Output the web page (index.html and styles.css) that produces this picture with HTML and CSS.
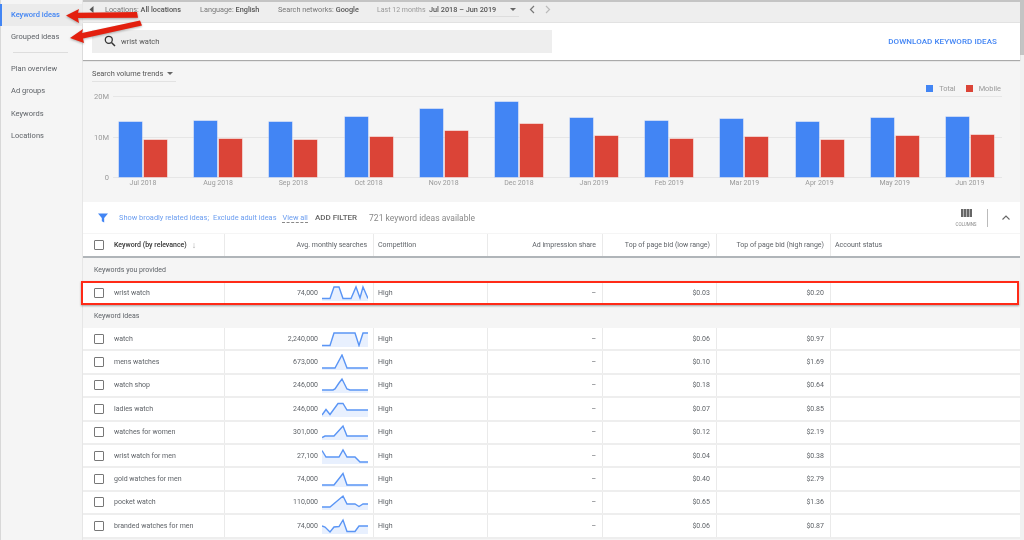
FILE: index.html
```html
<!DOCTYPE html>
<html lang="en">
<head>
<meta charset="utf-8">
<title>Keyword ideas</title>
<link rel="stylesheet" href="styles.css">
</head>
<body>
<div class="page">
  <nav class="sidebar">
    <a class="nav-item active">Keyword ideas</a>
    <a class="nav-item">Grouped ideas</a>
    <div class="nav-divider"></div>
    <a class="nav-item">Plan overview</a>
    <a class="nav-item">Ad groups</a>
    <a class="nav-item">Keywords</a>
    <a class="nav-item">Locations</a>
  </nav>
  <main class="main">
    <header class="topbar">
      <svg class="collapse" width="6" height="9" viewBox="0 0 6 9"><path d="M4.500 1v7L.5 4.500z"/></svg>
      <span class="crumb crumb-loc">Locations: <b>All locations</b></span>
      <span class="crumb crumb-lang">Language: <b>English</b></span>
      <span class="crumb crumb-net">Search networks: <b>Google</b></span>
      <span class="crumb crumb-last">Last 12 months</span>
      <span class="range"><b>Jul 2018 – Jun 2019</b><i class="caret"></i></span>
      <svg class="pager" width="6" height="9" viewBox="0 0 6 9"><path d="M5 1 1.500 4.500 5 8" fill="none" stroke="#777" stroke-width="1.200"/></svg>
      <svg class="pager pager-next" width="6" height="9" viewBox="0 0 6 9"><path d="M1 1l3.500 3.500L1 8" fill="none" stroke="#bbb" stroke-width="1.200"/></svg>
    </header>
    <section class="searchbar">
      <div class="search-box">
        <svg width="12" height="12" viewBox="0 0 12 12"><circle cx="4.800" cy="4.800" r="3.500" fill="none" stroke="#333" stroke-width="1.300"/><path d="M7.500 7.500 11 11" stroke="#333" stroke-width="1.500"/></svg>
        <span>wrist watch</span>
      </div>
      <a class="download">DOWNLOAD KEYWORD IDEAS</a>
    </section>
    <section class="chart">
      <div class="chart-head">
        <div class="trend-select">Search volume trends<i class="caret"></i></div>
        <div class="legend">
          <i class="swatch blue"></i><span>Total</span>
          <i class="swatch red"></i><span>Mobile</span>
        </div>
      </div>
      <div class="chart-body">
        <div class="y-axis"><span>20M</span><span>10M</span><span>0</span></div>
        <div class="plot">
          <div class="bars">
            <div class="group"><i class="bar blue" style="height:55px"></i><i class="bar red" style="height:37px"></i></div>
            <div class="group"><i class="bar blue" style="height:56px"></i><i class="bar red" style="height:38px"></i></div>
            <div class="group"><i class="bar blue" style="height:55px"></i><i class="bar red" style="height:37px"></i></div>
            <div class="group"><i class="bar blue" style="height:60px"></i><i class="bar red" style="height:40px"></i></div>
            <div class="group"><i class="bar blue" style="height:68px"></i><i class="bar red" style="height:46px"></i></div>
            <div class="group"><i class="bar blue" style="height:75px"></i><i class="bar red" style="height:53px"></i></div>
            <div class="group"><i class="bar blue" style="height:59px"></i><i class="bar red" style="height:41px"></i></div>
            <div class="group"><i class="bar blue" style="height:56px"></i><i class="bar red" style="height:38px"></i></div>
            <div class="group"><i class="bar blue" style="height:58px"></i><i class="bar red" style="height:40px"></i></div>
            <div class="group"><i class="bar blue" style="height:55px"></i><i class="bar red" style="height:37px"></i></div>
            <div class="group"><i class="bar blue" style="height:59px"></i><i class="bar red" style="height:41px"></i></div>
            <div class="group"><i class="bar blue" style="height:60px"></i><i class="bar red" style="height:42px"></i></div>
          </div>
          <div class="months">
            <span>Jul 2018</span><span>Aug 2018</span><span>Sep 2018</span><span>Oct 2018</span><span>Nov 2018</span><span>Dec 2018</span><span>Jan 2019</span><span>Feb 2019</span><span>Mar 2019</span><span>Apr 2019</span><span>May 2019</span><span>Jun 2019</span>
          </div>
        </div>
      </div>
    </section>
    <section class="filterbar">
      <svg class="funnel" width="10" height="10" viewBox="0 0 11 11"><path d="M0 .500h11L6.800 5.500V10.500L4.200 9V5.500z"/></svg>
      <a class="link">Show broadly related ideas;</a>
      <a class="link">Exclude adult ideas</a>
      <a class="link view-all">View all</a>
      <span class="add-filter">ADD FILTER</span>
      <span class="count">721 keyword ideas available</span>
      <div class="columns-btn">
        <svg width="11" height="8" viewBox="0 0 11 8"><path d="M0 0h2.400v8H0zM2.900 0h2.400v8H2.900zM5.800 0h2.400v8H5.800zM8.700 0H11v8H8.700z"/></svg>
        <span>COLUMNS</span>
      </div>
      <i class="filter-divider"></i>
      <svg class="chev-up" width="8" height="5" viewBox="0 0 8 5"><path d="M.500 4.500 4 1l3.500 3.500" fill="none" stroke="#666" stroke-width="1.100"/></svg>
    </section>
    <section class="table">
      <div class="row head">
        <div class="cell kw"><i class="check"></i><b>Keyword (by relevance)</b><span class="sort">↓</span></div>
        <div class="cell num">Avg. monthly searches</div>
        <div class="cell">Competition</div>
        <div class="cell num">Ad impression share</div>
        <div class="cell num">Top of page bid (low range)</div>
        <div class="cell num">Top of page bid (high range)</div>
        <div class="cell">Account status</div>
      </div>
      <div class="group-label">Keywords you provided</div>
      <div class="row provided">
        <div class="cell kw"><i class="check"></i>wrist watch</div>
        <div class="cell searches">74,000<svg class="spark" viewBox="0 0 46 16"><polygon points="0,16 0,13.500 8,13.500 12,2 17,2 21,13.500 29,13.500 34,2 38,13 41,2 46,13.500 46,16"/><polyline points="0,13.500 8,13.500 12,2 17,2 21,13.500 29,13.500 34,2 38,13 41,2 46,13.500"/></svg></div>
        <div class="cell">High</div><div class="cell num">–</div><div class="cell num">$0.03</div><div class="cell num">$0.20</div><div class="cell"></div>
      </div>
      <div class="group-label">Keyword ideas</div>
      <div class="row">
        <div class="cell kw"><i class="check"></i>watch</div>
        <div class="cell searches">2,240,000<svg class="spark" viewBox="0 0 46 16"><polygon points="0,16 0,14.500 8,14.500 12,2 33,2 37,14.500 41,2 46,2 46,16"/><polyline points="0,14.500 8,14.500 12,2 33,2 37,14.500 41,2 46,2"/></svg></div>
        <div class="cell">High</div><div class="cell num">–</div><div class="cell num">$0.06</div><div class="cell num">$0.97</div><div class="cell"></div>
      </div>
      <div class="row">
        <div class="cell kw"><i class="check"></i>mens watches</div>
        <div class="cell searches">673,000<svg class="spark" viewBox="0 0 46 16"><polygon points="0,16 0,14 13,14 20,1 25,14 46,14 46,16"/><polyline points="0,14 13,14 20,1 25,14 46,14"/></svg></div>
        <div class="cell">High</div><div class="cell num">–</div><div class="cell num">$0.10</div><div class="cell num">$1.69</div><div class="cell"></div>
      </div>
      <div class="row">
        <div class="cell kw"><i class="check"></i>watch shop</div>
        <div class="cell searches">246,000<svg class="spark" viewBox="0 0 46 16"><polygon points="0,16 0,13 11,13 13,12 17,6 20,2 25,12 28,13 46,13 46,16"/><polyline points="0,13 11,13 13,12 17,6 20,2 25,12 28,13 46,13"/></svg></div>
        <div class="cell">High</div><div class="cell num">–</div><div class="cell num">$0.18</div><div class="cell num">$0.64</div><div class="cell"></div>
      </div>
      <div class="row">
        <div class="cell kw"><i class="check"></i>ladies watch</div>
        <div class="cell searches">246,000<svg class="spark" viewBox="0 0 46 16"><polygon points="0,16 0,14 4,8.500 8,13.500 16,2.500 21,2.500 25,9 46,9 46,16"/><polyline points="0,14 4,8.500 8,13.500 16,2.500 21,2.500 25,9 46,9"/></svg></div>
        <div class="cell">High</div><div class="cell num">–</div><div class="cell num">$0.07</div><div class="cell num">$0.85</div><div class="cell"></div>
      </div>
      <div class="row">
        <div class="cell kw"><i class="check"></i>watches for women</div>
        <div class="cell searches">301,000<svg class="spark" viewBox="0 0 46 16"><polygon points="0,16 0,13.500 3,12 12,12 21,2 25,12 46,12 46,16"/><polyline points="0,13.500 3,12 12,12 21,2 25,12 46,12"/></svg></div>
        <div class="cell">High</div><div class="cell num">–</div><div class="cell num">$0.12</div><div class="cell num">$2.19</div><div class="cell"></div>
      </div>
      <div class="row">
        <div class="cell kw"><i class="check"></i>wrist watch for men</div>
        <div class="cell searches">27,100<svg class="spark" viewBox="0 0 46 16"><polygon points="0,16 0,2.500 4,9 17,9 21,2 25,9 33,9 38,14 46,14 46,16"/><polyline points="0,2.500 4,9 17,9 21,2 25,9 33,9 38,14 46,14"/></svg></div>
        <div class="cell">High</div><div class="cell num">–</div><div class="cell num">$0.04</div><div class="cell num">$0.38</div><div class="cell"></div>
      </div>
      <div class="row">
        <div class="cell kw"><i class="check"></i>gold watches for men</div>
        <div class="cell searches">74,000<svg class="spark" viewBox="0 0 46 16"><polygon points="0,16 0,14 12,14 21,2.500 25,14 46,14 46,16"/><polyline points="0,14 12,14 21,2.500 25,14 46,14"/></svg></div>
        <div class="cell">High</div><div class="cell num">–</div><div class="cell num">$0.40</div><div class="cell num">$2.79</div><div class="cell"></div>
      </div>
      <div class="row">
        <div class="cell kw"><i class="check"></i>pocket watch</div>
        <div class="cell searches">110,000<svg class="spark" viewBox="0 0 46 16"><polygon points="0,16 0,13 8,13 21,2 25,10 33,10 37,12.500 41,10 46,10 46,16"/><polyline points="0,13 8,13 21,2 25,10 33,10 37,12.500 41,10 46,10"/></svg></div>
        <div class="cell">High</div><div class="cell num">–</div><div class="cell num">$0.65</div><div class="cell num">$1.36</div><div class="cell"></div>
      </div>
      <div class="row">
        <div class="cell kw"><i class="check"></i>branded watches for men</div>
        <div class="cell searches">74,000<svg class="spark" viewBox="0 0 46 16"><polygon points="0,16 0,8 3,9 8,14 12,9 17,8.500 21,2 25,13.500 33,13.500 37,8 46,8 46,16"/><polyline points="0,8 3,9 8,14 12,9 17,8.500 21,2 25,13.500 33,13.500 37,8 46,8"/></svg></div>
        <div class="cell">High</div><div class="cell num">–</div><div class="cell num">$0.06</div><div class="cell num">$0.87</div><div class="cell"></div>
      </div>
    </section>
  </main>
  <div class="scrollbar"><i class="thumb"></i></div>

  <div class="highlight"></div>
  <svg class="arrows" width="150" height="50" viewBox="0 0 150 50">
    <polygon points="66,15.500 79,9 78,12.700 137,12 138,17.800 78,18 79,23"/>
    <polygon points="70,38 83,29 82,33 140,20.500 142,25.500 83,38.500 84,43"/>
  </svg>
</div>
</body>
</html>
```
FILE: styles.css
```css
* { box-sizing: border-box; }
html, body { margin: 0; height: 100%; background: #f5f5f5; overflow: hidden; }
body { font-family: Roboto, "Liberation Sans", sans-serif; font-size: 7px; color: #5f6368; }
b { font-weight: 500; }
i { display: block; font-style: normal; }

.page { position: relative; display: flex; width: 1024px; height: 540px; overflow: hidden; background: #f5f5f5; filter: blur(.4px); }

/* Sidebar */
.sidebar { width: 83px; flex: none; padding-top: 3.500px; border-left: 1px solid #d8d8d8; border-right: 1px solid #e6e6e6; background: #f5f5f5; font-size: 7.500px; }
.nav-item { display: flex; align-items: center; height: 22.300px; padding-left: 10px; }
.nav-item.active { height: 22px; margin-left: -1px; padding-left: 9px; border-left: 2px solid #4285f4; background: #ebebeb; color: #4285f4; font-weight: 500; }
.nav-divider { height: 1px; margin: 4px 14px 4.500px 12px; background: #ddd; }

/* Main column */
.main { flex: 1; min-width: 0; display: flex; flex-direction: column; }

.topbar { display: flex; align-items: center; height: 23px; padding: 0 0 5px 6px; background: #eeeeee; border-top: 2px solid #c4c4c4; border-bottom: 1px solid #e2e2e2; white-space: nowrap; font-size: 7.300px; }
.collapse { fill: #555; margin-right: 10px; flex: none; }
.crumb { color: #777; }
.crumb b { color: #555; }
.crumb-loc { width: 95px; }
.crumb-lang { width: 78px; }
.crumb-net { width: 99px; }
.crumb-last { width: 52px; color: #999; font-size: 7px; }
.range { display: flex; align-items: center; justify-content: space-between; width: 90px; height: 14px; padding-right: 3px; border-bottom: 1px solid #ddd; color: #555; }
.caret { width: 0; height: 0; border: 3px solid transparent; border-top-color: #666; border-bottom: 0; }
.pager { margin-left: 10px; flex: none; }

.searchbar { display: flex; align-items: center; justify-content: space-between; height: 37px; padding: 0 23px 1px 9px; background: #fff; box-shadow: 0 1px 1px #aaa; position: relative; font-size: 7.500px; }
.search-box { display: flex; align-items: center; gap: 5px; width: 460px; height: 23px; padding-left: 12px; background: #eeeeee; color: #555; }
.search-box svg { flex: none; }
.download { color: #4285f4; font-weight: 500; font-size: 8px; letter-spacing: .08px; }

.chart { height: 142px; padding-top: 5px; }
.chart-head { display: flex; justify-content: space-between; height: 31px; padding: 0 19px 0 9px; font-size: 7.400px; }
.trend-select { display: flex; align-items: center; gap: 4px; width: 84px; height: 17px; border-bottom: 1px solid #e2e2e2; color: #555; white-space: nowrap; }
.legend { display: flex; align-items: center; height: 12px; margin-top: 17.500px; color: #9a9a9a; }
.swatch { width: 7px; height: 7px; margin-right: 6px; }
.legend span + .swatch { margin-left: 10px; }
.blue { background: #4285f4; }
.red { background: #db4437; }

.chart-body { display: flex; padding-right: 18px; }
.y-axis { display: flex; flex-direction: column; justify-content: space-between; width: 30px; height: 82px; padding-right: 4px; text-align: right; color: #9a9a9a; flex: none; font-size: 7.500px; }
.y-axis span { line-height: 1px; height: 1px; }
.plot { flex: 1; min-width: 0; }
.bars {
  display: grid; grid-template-columns: repeat(12, 75.180px); height: 82px; margin-left: -7.600px; margin-right: -6px; align-items: end;
  background:
    linear-gradient(#e6e6e6, #e6e6e6) 7.600px 0 / 889px 1px no-repeat,
    linear-gradient(#e6e6e6, #e6e6e6) 7.600px 41px / 889px 1px no-repeat,
    linear-gradient(#e6e6e6, #e6e6e6) 7.600px 81px / 889px 1px no-repeat;
}
.group { display: flex; align-items: flex-end; justify-content: center; gap: 2px; height: 81px; align-self: start; }
.bar { width: 23px; }
.bar.blue { box-shadow: 0 0 0 .5px #9dbcf5; }
.bar.red { box-shadow: 0 0 0 .5px #eea8a0; }
.months { display: grid; grid-template-columns: repeat(12, 75.180px); margin: 0 -6px 0 -7.600px; padding-top: 1px; text-align: center; color: #9a9a9a; font-size: 7px; }

.filterbar { display: flex; align-items: center; height: 31px; padding: 0 0 0 15px; background: #fff; white-space: nowrap; font-size: 7.400px; }
.funnel { fill: #4285f4; margin-right: 11px; flex: none; }
.link { color: #6c9ef0; margin-right: 4px; }
.view-all { margin-left: 2px; margin-right: 7px; border-bottom: 1px dashed #888; }
.add-filter { font-weight: 500; color: #666; margin-right: 12px; font-size: 8px; }
.count { color: #888; font-size: 8.500px; }
.columns-btn { display: flex; flex-direction: column; align-items: center; gap: 5px; margin-left: auto; width: 24px; fill: #666; }
.columns-btn span { font-size: 4.500px; color: #888; }
.filter-divider { width: 1px; height: 18px; margin: 0 14px 0 9px; background: #bbb; }
.chev-up { margin-right: 10px; }

.table { background: #f5f5f5; flex: 1; }
.row { display: grid; grid-template-columns: 141px 149px 114px 115px 114px 114px 1fr; height: 23.400px; background: #fff; border-bottom: 2px solid #eeeeee; }
.cell { display: flex; align-items: center; padding: 0 5px 0 4px; border-left: 1px solid #eaeaea; white-space: nowrap; min-width: 0; }
.cell:first-child { border-left: 0; }
.num { justify-content: flex-end; padding-right: 6px; }
.kw { padding-left: 11px; }
.check { width: 10px; height: 10px; margin-right: 10px; border: 1.500px solid #777; border-radius: 1px; flex: none; }
.sort { margin-left: 5px; color: #aaa; font-size: 9px; }
.searches { justify-content: flex-end; gap: 4px; padding-right: 5px; }
.spark { width: 46px; height: 16px; flex: none; }
.spark polygon { fill: #e8f0fe; }
.spark polyline { fill: none; stroke: #5a95f5; stroke-width: 1.400; }

.head { height: 24px; margin-top: 1px; border-bottom: 2px solid #b0b5b9; }
.head .kw b { color: #333; }
.group-label { display: flex; align-items: center; height: 24px; padding-left: 11px; color: #5f6368; }
.provided { height: 22px; border-bottom: 0; }

.scrollbar { width: 4px; flex: none; background: #f1f1f1; }
.thumb { width: 4px; height: 55px; background: #c4c4c4; }

/* Annotations painted over the screenshot */
.highlight { position: absolute; left: 81px; top: 280.500px; width: 938px; height: 24px; border: 2px solid #ff2a17; box-shadow: 0 1px 2px rgba(0,0,0,.35); }
.arrows { position: absolute; left: 0; top: 0; fill: #e3200f; filter: drop-shadow(0 1px 1px rgba(0,0,0,.3)); }
```
